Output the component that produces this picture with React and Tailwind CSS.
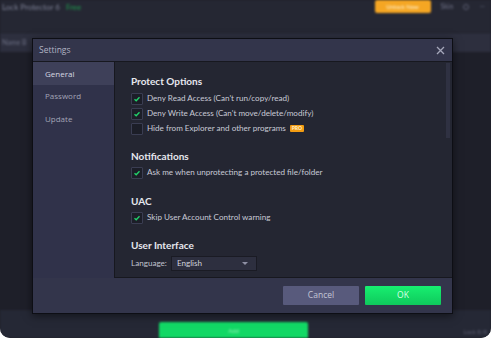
import React from "react";

function Check({ checked }) {
  return (
    <span className="flex h-[12px] w-[12px] shrink-0 items-center justify-center rounded-[1px] border border-[#3a3d52] bg-[#1c1e28]">
      {checked && (
        <svg width="8" height="8" viewBox="0 0 8 8">
          <path d="M1.5 4.2 L3.2 5.8 L6.5 2.2" stroke="#22d36b" strokeWidth="1.3" fill="none" />
        </svg>
      )}
    </span>
  );
}

function Row({ checked, children }) {
  return (
    <div className="flex h-[15px] items-center gap-[4px]">
      <Check checked={checked} />
      <span className="flex items-center text-[8.1px] text-[#c8cad6]">{children}</span>
    </div>
  );
}

function Heading({ children }) {
  return <div className="text-[10px] font-bold leading-[14px] text-[#e6e7ee]">{children}</div>;
}

export default function App() {
  return (
    <div className="relative h-[338px] w-[491px] overflow-hidden bg-white" style={{ fontFamily: 'Lato, "Open Sans", sans-serif' }}>
      {/* background app */}
      <div className="flex h-full w-full flex-col overflow-hidden rounded-b-[10px] bg-[#1e1f29]">
        <div className="flex h-[33px] shrink-0 items-start justify-between bg-[#252733] blur-[1px]">
          <div className="flex items-center gap-[6px] pl-[2px] pt-[1px] text-[8px]">
            <span className="text-[#7d8095]">Lock Protector 6</span>
            <span className="text-[#1f9a4e]">Free</span>
          </div>
          <div className="flex items-center gap-[10px] pr-[6px]">
            <div className="flex h-[13px] w-[56px] items-center justify-center rounded-[2px] bg-[#f5a623] text-[6px] text-[#fff3d6]">Unlock Now</div>
            <span className="text-[7px] text-[#6e7186]">Skin</span>
            <span className="h-[6px] w-[6px] rounded-full border border-[#5b5e72]" />
            <span className="text-[7px] text-[#5b5e72]">—</span>
          </div>
        </div>
        <div className="flex h-[19px] shrink-0 items-center bg-[#2d2f3e] pl-[2px] blur-[1px]">
          <span className="text-[7px] text-[#6d7085]">Name B</span>
        </div>
        <div className="flex-1" />
        <div className="flex h-[28px] shrink-0 items-end justify-between bg-[#252835] blur-[1px]">
          <div className="ml-[159px] flex h-[16px] w-[149px] items-center justify-center rounded-t-[2px] bg-[#12d865] text-[6px] text-[#8af0b0]">Add</div>
          <span className="mb-[2px] mr-[4px] text-[6px] text-[#5b5e72]">Lock 8/8</span>
        </div>
      </div>

      {/* dialog */}
      <div className="absolute left-[32px] top-[38px] flex h-[276px] w-[421px] flex-col border border-[#0d0e14] bg-[#33354b] shadow-[0_2px_8px_rgba(0,0,0,0.5)]">
        <div className="flex h-[23px] shrink-0 items-center justify-between border-b border-[#17181f] pl-[6px] pr-[7px]">
          <span className="text-[8.5px] text-[#b2b4c4]" style={{ fontFamily: '"Open Sans", sans-serif' }}>Settings</span>
          <svg width="9" height="9" viewBox="0 0 9 9">
            <path d="M1 1 L8 8 M8 1 L1 8" stroke="#a5a7ba" strokeWidth="1.3" />
          </svg>
        </div>
        <div className="flex min-h-0 flex-1">
          <div className="flex w-[81px] shrink-0 flex-col bg-[#30324a] text-[8px]" style={{ fontFamily: '"Open Sans", sans-serif' }}>
            <div className="flex h-[23px] items-center bg-[#3e4059] pl-[12px] text-[#d7d8e2]">General</div>
            <div className="flex h-[22px] items-center pl-[12px] text-[#a2a4b6]">Password</div>
            <div className="flex h-[23px] items-center pl-[12px] text-[#a2a4b6]">Update</div>
          </div>
          <div className="relative flex-1 border-b border-l border-[#17181f] bg-[#242632] pl-[16px] pt-[12px]">
            <div className="absolute right-[2px] top-[1px] h-[75px] w-[4px] bg-[#2f3142]" />
            <Heading>Protect Options</Heading>
            <div className="mt-[3px] flex flex-col">
              <Row checked>Deny Read Access (Can't run/copy/read)</Row>
              <Row checked>Deny Write Access (Can't move/delete/modify)</Row>
              <Row>
                Hide from Explorer and other programs
                <span className="ml-[4px] flex h-[7px] w-[14px] items-center justify-center rounded-[1px] bg-[#f39c12] text-[5px] font-bold text-[#fff1d0]">PRO</span>
              </Row>
            </div>
            <div className="mt-[13px]"><Heading>Notifications</Heading></div>
            <div className="mt-[2px]"><Row checked>Ask me when unprotecting a protected file/folder</Row></div>
            <div className="mt-[14px]"><Heading>UAC</Heading></div>
            <div className="mt-[2px]"><Row checked>Skip User Account Control warning</Row></div>
            <div className="mt-[13px]"><Heading>User Interface</Heading></div>
            <div className="mt-[4px] flex items-center gap-[4px]">
              <span className="text-[8.1px] text-[#c0c2ce]">Language:</span>
              <div className="flex h-[15px] w-[86px] items-center justify-between border border-[#1a1b24] bg-[#2d2f3f] pl-[5px] pr-[8px]">
                <span className="text-[8.1px] text-[#d0d2dc]">English</span>
                <svg width="6" height="4" viewBox="0 0 6 4"><path d="M0 0 L6 0 L3 3 Z" fill="#8e90a4" /></svg>
              </div>
            </div>
          </div>
        </div>
        <div className="flex h-[35px] shrink-0 items-center justify-end gap-[6px] pr-[11px]">
          <div className="flex h-[19px] w-[76px] items-center justify-center rounded-[1px] bg-[#585a7c] text-[8.5px] text-[#c4c6d6]" style={{ fontFamily: '"Open Sans", sans-serif' }}>Cancel</div>
          <div className="flex h-[19px] w-[76px] items-center justify-center rounded-[1px] bg-gradient-to-b from-[#17ef70] to-[#0fc95c] text-[8.5px] text-[#d9ffe6]" style={{ fontFamily: '"Open Sans", sans-serif' }}>OK</div>
        </div>
      </div>
    </div>
  );
}
